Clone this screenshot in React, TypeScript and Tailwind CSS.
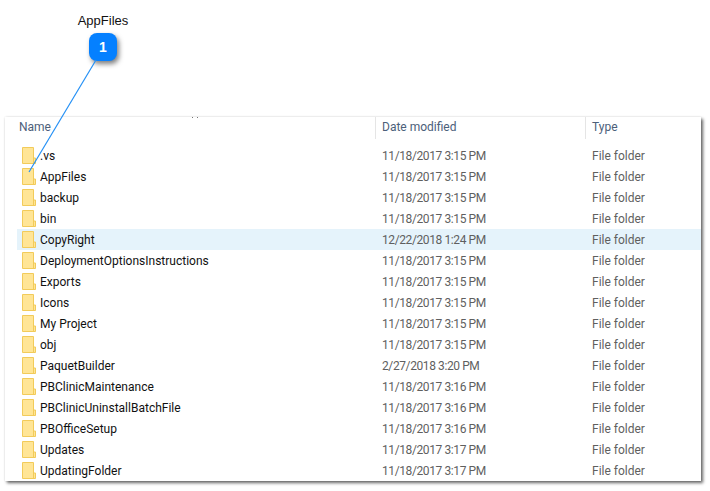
const rows: [string, string, boolean?][] = [
  [".vs", "11/18/2017 3:15 PM"],
  ["AppFiles", "11/18/2017 3:15 PM"],
  ["backup", "11/18/2017 3:15 PM"],
  ["bin", "11/18/2017 3:15 PM"],
  ["CopyRight", "12/22/2018 1:24 PM", true],
  ["DeploymentOptionsInstructions", "11/18/2017 3:15 PM"],
  ["Exports", "11/18/2017 3:15 PM"],
  ["Icons", "11/18/2017 3:15 PM"],
  ["My Project", "11/18/2017 3:15 PM"],
  ["obj", "11/18/2017 3:15 PM"],
  ["PaquetBuilder", "2/27/2018 3:20 PM"],
  ["PBClinicMaintenance", "11/18/2017 3:16 PM"],
  ["PBClinicUninstallBatchFile", "11/18/2017 3:16 PM"],
  ["PBOfficeSetup", "11/18/2017 3:16 PM"],
  ["Updates", "11/18/2017 3:17 PM"],
  ["UpdatingFolder", "11/18/2017 3:17 PM"],
];

function Folder() {
  return (
    <svg width="14" height="17" viewBox="0 0 14 17" className="shrink-0">
      <path d="M0.5 0.5H11.5V11H13.5V16.5H0.5Z" fill="#FFE596" stroke="#F2CB5A" />
      <path d="M11.5 11V16" stroke="#F2CB5A" />
    </svg>
  );
}

export default function App() {
  return (
    <div className="relative w-[710px] h-[491px] bg-white overflow-hidden font-['Liberation_Sans',sans-serif]">
      <div className="flex flex-col items-start">
        <div className="w-[206px] pt-[13px] h-[33px] text-center text-[13px] leading-[16px] text-[#111]">AppFiles</div>
        <div className="ml-[89px] w-[28px] h-[28px] rounded-[8px] bg-[#0580FF] text-white font-bold text-[14px] flex items-center justify-center shadow-[2px_3px_5px_rgba(0,0,0,0.5)]">1</div>
        <div className="mt-[56px] ml-[5px] w-[696px] h-[364px] bg-white shadow-[2px_2px_3px_rgba(0,0,0,0.6),0_0_2px_rgba(0,0,0,0.12)] font-['Roboto',sans-serif] text-[12px]">
          <div className="flex h-[22px] text-[#4c607a]">
            <div className="w-[370px] pl-[14px] leading-[20px]">Name</div>
            <div className="w-[210px] pl-[6px] leading-[20px] border-l border-[#e5e5e5]">Date modified</div>
            <div className="flex-1 pl-[6px] leading-[20px] border-l border-[#e5e5e5]">Type</div>
          </div>
          <div className="mt-[6px] flex flex-col">
            {rows.map(([name, date, sel]) => (
              <div key={name} className={`flex items-center h-[21px] ml-[12px] ${sel ? "bg-[#e5f3fb]" : ""}`}>
                <div className="w-[359px] pl-[5px] flex items-center gap-[4px] text-[#111]">
                  <Folder />
                  <span>{name}</span>
                </div>
                <div className="w-[210px] pl-[6px] text-[#5f5f5f] tracking-[-0.4px]">{date}</div>
                <div className="pl-[6px] text-[#5f5f5f]">File folder</div>
              </div>
            ))}
          </div>
        </div>
      </div>
      <div className="absolute left-[192px] top-[117px] w-[1px] h-[1px] bg-[#777]" />
      <div className="absolute left-[197px] top-[117px] w-[1px] h-[1px] bg-[#777]" />
      <svg className="absolute inset-0 pointer-events-none" width="710" height="491">
        <line x1="96" y1="60" x2="29" y2="172" stroke="#2490F5" strokeWidth="1.2" />
      </svg>
    </div>
  );
}
